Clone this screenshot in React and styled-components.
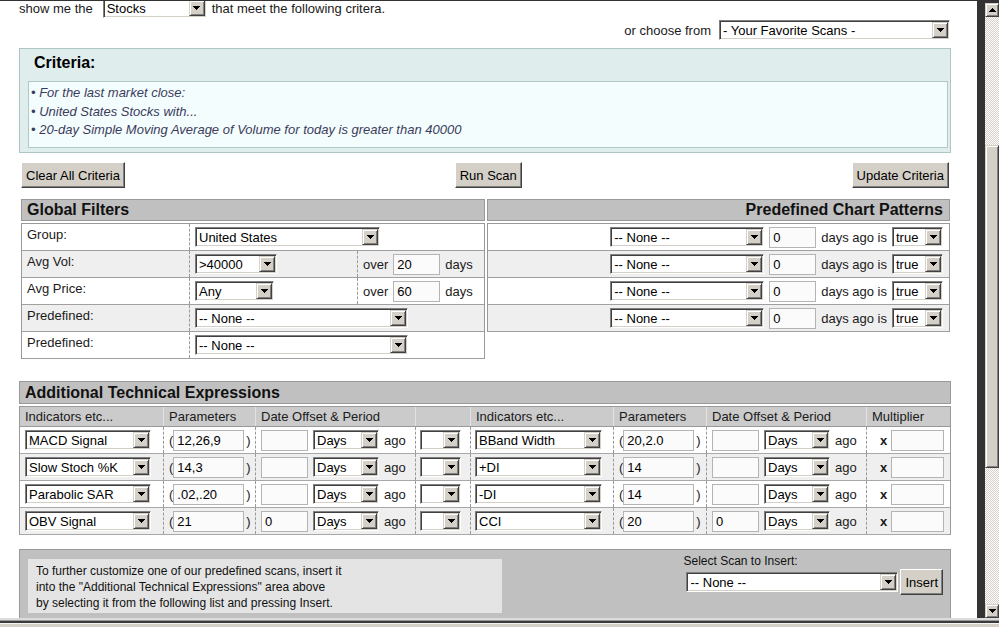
import React from 'react';
import styled, { createGlobalStyle } from 'styled-components';

const FONT = '"Liberation Sans", Arial, sans-serif';

const GlobalStyle = createGlobalStyle`
  html, body { margin: 0; padding: 0; background: #fff; overflow: hidden; }
  body { font-family: ${FONT}; font-size: 13px; color: #1a1a1a; }
  * { box-sizing: border-box; }
`;

const Frame = styled.div`
  width: 999px;
  height: 627px;
  display: flex;
  flex-direction: column;
  overflow: hidden;
  background: #fff;
`;
const TopLine = styled.div`
  height: 1px;
  flex: none;
  background: #333;
`;
const Middle = styled.div`
  flex: 1;
  min-height: 0;
  display: flex;
`;
const Content = styled.div`
  width: 977px;
  flex: none;
  overflow: hidden;
  padding: 0 26px 0 19px;
`;
const DarkBar = styled.div`
  width: 8px;
  flex: none;
  background: #333;
`;
const ScrollCol = styled.div`
  width: 14px;
  flex: none;
  background: #333;
  padding-top: 2px;
  display: flex;
  flex-direction: column;
`;
const raised = `
  background: #d4d0c8;
  border: 1px solid;
  border-color: #d4d0c8 #404040 #404040 #d4d0c8;
  box-shadow: inset 1px 1px #fff, inset -1px -1px #808080;
`;
const ScrollBtn = styled.div`
  height: 14px;
  flex: none;
  ${raised}
  display: flex;
  align-items: center;
  justify-content: center;
`;
const Track = styled.div`
  flex: ${p => (p.$fill ? 1 : 'none')};
  height: ${p => (p.$fill ? 'auto' : `${p.$h}px`)};
  background: repeating-conic-gradient(#d4d0c8 0 25%, #fff 0 50%) 0 0 / 2px 2px;
`;
const Thumb = styled.div`
  height: 323px;
  flex: none;
  ${raised}
`;
const BottomStrip = styled.div`
  height: 9px;
  flex: none;
  background: linear-gradient(
    to bottom,
    #dcdcdc 0 2px,
    #9a9a9a 2px 3px,
    #3a3a3a 3px 5px,
    #f4f4f4 5px 6px,
    #d4d0c8 6px 9px
  );
`;

/* ---------- form controls ---------- */
const SelectBox = styled.div`
  display: inline-flex;
  flex: none;
  width: ${p => p.$w}px;
  height: 20px;
  padding: 1px;
  background: #fff;
  border: 1px solid;
  border-color: #808080 #fff #fff #808080;
  box-shadow: inset 1px 1px #404040, inset -1px -1px #d4d0c8;
`;
const SelectText = styled.span`
  flex: 1;
  min-width: 0;
  padding: 1px 0 0 2px;
  font-size: 13px;
  line-height: 15px;
  color: #000;
  white-space: nowrap;
  overflow: hidden;
`;
const SelectArrow = styled.span`
  width: 16px;
  height: 16px;
  flex: none;
  ${raised}
  display: flex;
  align-items: center;
  justify-content: center;
`;
const Tri = ({ up }) => (
  <svg width="7" height="4" viewBox="0 0 7 4" shapeRendering="crispEdges">
    <path
      fill="#000"
      d={
        up
          ? 'M3 0h1v1H3zM2 1h3v1H2zM1 2h5v1H1zM0 3h7v1H0z'
          : 'M0 0h7v1H0zM1 1h5v1H1zM2 2h3v1H2zM3 3h1v1H3z'
      }
    />
  </svg>
);
const Select = ({ w, value }) => (
  <SelectBox $w={w}>
    <SelectText>{value}</SelectText>
    <SelectArrow>
      <Tri />
    </SelectArrow>
  </SelectBox>
);
const TextInput = styled.input`
  width: ${p => p.$w}px;
  height: 21px;
  flex: none;
  margin: 0;
  padding: 0 3px;
  border: 1px solid #b4b4b4;
  background: #fbfbfb;
  font: 13px ${FONT};
  color: #000;
  outline: none;
`;
const Field = ({ w, value }) => <TextInput $w={w} value={value} readOnly />;

const Button = styled.button`
  height: 26px;
  margin: 0;
  padding: 0 4px;
  font: 13px ${FONT};
  color: #000;
  background: #d4d0c8;
  border: 1px solid;
  border-color: #fff #404040 #404040 #fff;
  box-shadow: inset -1px -1px #808080;
  white-space: nowrap;
  cursor: default;
`;

/* ---------- top ---------- */
const TopRow = styled.div`
  display: flex;
  align-items: center;
  height: 20px;
  margin-top: -3px;
  white-space: nowrap;
`;
const Lead = styled.span`
  margin-right: 10px;
`;
const Trail = styled.span`
  margin-left: 5px;
`;
const ChooseRow = styled.div`
  display: flex;
  justify-content: flex-end;
  align-items: center;
  gap: 8px;
  height: 20px;
  margin-top: 2px;
  padding-right: 1px;
  white-space: nowrap;
`;

/* ---------- criteria ---------- */
const CriteriaBox = styled.div`
  margin-top: 8px;
  background: #dfeded;
  border: 1px solid #adc5c5;
  padding: 0 2px 4px 8px;
`;
const CriteriaTitle = styled.div`
  padding: 4px 0 9px 6px;
  font-size: 16px;
  font-weight: bold;
  line-height: 19px;
  color: #000;
`;
const CriteriaList = styled.div`
  background: #f4fdfd;
  border: 1px solid #b0c8c8;
  padding: 2px 3px 7.5px 2px;
`;
const CriteriaItem = styled.div`
  line-height: 18.5px;
  font-style: italic;
  color: #3b3b5c;
  white-space: nowrap;
`;

/* ---------- buttons ---------- */
const ButtonRow = styled.div`
  display: flex;
  justify-content: space-between;
  margin-top: 9px;
  padding: 0 2px;
`;

/* ---------- filter tables ---------- */
const TablesRow = styled.div`
  display: grid;
  grid-template-columns: 464px 463px;
  column-gap: 2px;
  align-items: start;
  margin-top: 11px;
  padding-left: 2px;
`;
const SectionHead = styled.div`
  height: ${p => p.$h || 22}px;
  background: #c0c0c0;
  border: 1px solid #999;
  padding: 0 6px 0 5px;
  font-size: 16px;
  font-weight: bold;
  line-height: ${p => (p.$h || 22) - 2}px;
  color: #111;
  text-align: ${p => (p.$right ? 'right' : 'left')};
  white-space: nowrap;
`;
const TableBody = styled.div`
  margin-top: 2px;
  border: 1px solid #999;
  border-bottom: none;
`;
const GFRow = styled.div`
  display: grid;
  grid-template-columns: 167px 168px 1fr;
  height: 27px;
  border-bottom: 1px solid #a0a0a0;
  background: ${p => (p.$alt ? '#efefef' : '#fff')};
`;
const GFLabel = styled.div`
  padding: 3px 0 0 5px;
  line-height: 16px;
  white-space: nowrap;
`;
const GFControl = styled.div`
  grid-column: span ${p => p.$span || 1};
  border-left: 1px dashed #999;
  padding: 3px 0 0 5px;
`;
const GFExtra = styled.div`
  border-left: 1px dashed #999;
  padding-left: 5px;
  display: flex;
  align-items: center;
  gap: 5px;
  white-space: nowrap;
`;
const PCPRow = styled.div`
  display: flex;
  justify-content: flex-end;
  align-items: center;
  gap: 5px;
  height: 27px;
  padding-right: 6px;
  border-bottom: 1px solid #a0a0a0;
  background: ${p => (p.$alt ? '#efefef' : '#fff')};
  white-space: nowrap;
`;

/* ---------- additional technical expressions ---------- */
const ATE_COLS = '143px 92px 160px 55px 143px 93px 160px 84px';
const ATEWrap = styled.div`
  margin-top: 22px;
`;
const ATEGrid = styled.div`
  margin-top: 2px;
  border: 1px solid #999;
  border-bottom: none;
`;
const ATEHeadRow = styled.div`
  display: grid;
  grid-template-columns: ${ATE_COLS};
  height: 20px;
  background: #cbcbcb;
  border-bottom: 1px solid #999;
`;
const HeadCell = styled.div`
  padding-left: 5px;
  line-height: 19px;
  white-space: nowrap;
  overflow: hidden;
  & + & {
    border-left: 1px solid #e2e2e2;
  }
`;
const ATERow = styled.div`
  display: grid;
  grid-template-columns: ${ATE_COLS};
  height: 27px;
  border-bottom: 1px solid #a8a8a8;
  background: ${p => (p.$alt ? '#efefef' : '#fff')};
`;
const Cell = styled.div`
  display: flex;
  align-items: center;
  gap: ${p => p.$gap || 0}px;
  padding-left: ${p => p.$pl}px;
  white-space: nowrap;
  & + & {
    border-left: 1px dashed #999;
  }
`;
const Paren = styled.span`
  margin-left: ${p => (p.$close ? 2 : 0)}px;
`;
const Times = styled.b`
  font-weight: bold;
  margin-right: 4px;
`;

/* ---------- insert box ---------- */
const InsertBox = styled.div`
  margin-top: 14px;
  height: 90px;
  display: flex;
  justify-content: space-between;
  align-items: flex-start;
  background: #c0c0c0;
  border: 1px solid #999;
  padding: 4px 7px 0 8px;
`;
const InfoPanel = styled.div`
  width: 474px;
  margin-top: 5px;
  padding: 4px 8px 2px 8px;
  background: #e4e4e4;
  font-size: 12px;
  line-height: 16px;
  color: #111;
  white-space: nowrap;
`;
const InsertGroup = styled.div`
  display: flex;
  flex-direction: column;
`;
const InsertLabel = styled.div`
  font-size: 12px;
  line-height: 15px;
  color: #111;
`;
const InsertControls = styled.div`
  display: flex;
  align-items: center;
  gap: 2px;
  margin-left: 3px;
`;

const gfRows = [
  { label: 'Group:', sel: 'United States', w: 185 },
  { label: 'Avg Vol:', sel: '>40000', w: 82, over: '20' },
  { label: 'Avg Price:', sel: 'Any', w: 79, over: '60' },
  { label: 'Predefined:', sel: '-- None --', w: 213 },
  { label: 'Predefined:', sel: '-- None --', w: 213 },
];

const ateRows = [
  { a: 'MACD Signal', ap: '12,26,9', ao: '', b: 'BBand Width', bp: '20,2.0', bo: '' },
  { a: 'Slow Stoch %K', ap: '14,3', ao: '', b: '+DI', bp: '14', bo: '' },
  { a: 'Parabolic SAR', ap: '.02,.20', ao: '', b: '-DI', bp: '14', bo: '' },
  { a: 'OBV Signal', ap: '21', ao: '0', b: 'CCI', bp: '20', bo: '0' },
];

const ScrollBar = () => (
  <ScrollCol>
    <ScrollBtn>
      <Tri up />
    </ScrollBtn>
    <Track $h={128} />
    <Thumb />
    <Track $fill />
    <ScrollBtn>
      <Tri />
    </ScrollBtn>
  </ScrollCol>
);

export default function App() {
  return (
    <Frame>
      <GlobalStyle />
      <TopLine />
      <Middle>
        <Content>
          <TopRow>
            <Lead>show me the</Lead>
            <Select w={104} value="Stocks" />
            <Trail>that meet the following critera.</Trail>
          </TopRow>
          <ChooseRow>
            <span>or choose from</span>
            <Select w={231} value="- Your Favorite Scans -" />
          </ChooseRow>

          <CriteriaBox>
            <CriteriaTitle>Criteria:</CriteriaTitle>
            <CriteriaList>
              <CriteriaItem>• For the last market close:</CriteriaItem>
              <CriteriaItem>• United States Stocks with...</CriteriaItem>
              <CriteriaItem>
                • 20-day Simple Moving Average of Volume for today is greater than 40000
              </CriteriaItem>
            </CriteriaList>
          </CriteriaBox>

          <ButtonRow>
            <Button>Clear All Criteria</Button>
            <Button>Run Scan</Button>
            <Button>Update Criteria</Button>
          </ButtonRow>

          <TablesRow>
            <div>
              <SectionHead>Global Filters</SectionHead>
              <TableBody>
                {gfRows.map((r, i) => (
                  <GFRow key={i} $alt={i % 2 === 1}>
                    <GFLabel>{r.label}</GFLabel>
                    <GFControl $span={r.over ? 1 : 2}>
                      <Select w={r.w} value={r.sel} />
                    </GFControl>
                    {r.over && (
                      <GFExtra>
                        <span>over</span>
                        <Field w={47} value={r.over} />
                        <span>days</span>
                      </GFExtra>
                    )}
                  </GFRow>
                ))}
              </TableBody>
            </div>
            <div>
              <SectionHead $right>Predefined Chart Patterns</SectionHead>
              <TableBody>
                {[0, 1, 2, 3].map(i => (
                  <PCPRow key={i} $alt={i % 2 === 1}>
                    <Select w={154} value="-- None --" />
                    <Field w={47} value="0" />
                    <span>days ago is</span>
                    <Select w={51} value="true" />
                  </PCPRow>
                ))}
              </TableBody>
            </div>
          </TablesRow>

          <ATEWrap>
            <SectionHead $h={23}>Additional Technical Expressions</SectionHead>
            <ATEGrid>
              <ATEHeadRow>
                <HeadCell>Indicators etc...</HeadCell>
                <HeadCell>Parameters</HeadCell>
                <HeadCell>Date Offset &amp; Period</HeadCell>
                <HeadCell />
                <HeadCell>Indicators etc...</HeadCell>
                <HeadCell>Parameters</HeadCell>
                <HeadCell>Date Offset &amp; Period</HeadCell>
                <HeadCell>Multiplier</HeadCell>
              </ATEHeadRow>
              {ateRows.map((r, i) => (
                <ATERow key={i} $alt={i % 2 === 1}>
                  <Cell $pl={5}>
                    <Select w={126} value={r.a} />
                  </Cell>
                  <Cell $pl={5}>
                    <Paren>(</Paren>
                    <Field w={71} value={r.ap} />
                    <Paren $close>)</Paren>
                  </Cell>
                  <Cell $pl={5} $gap={5}>
                    <Field w={47} value={r.ao} />
                    <Select w={66} value="Days" />
                    <span>ago</span>
                  </Cell>
                  <Cell $pl={4}>
                    <Select w={41} value="" />
                  </Cell>
                  <Cell $pl={4}>
                    <Select w={127} value={r.b} />
                  </Cell>
                  <Cell $pl={5}>
                    <Paren>(</Paren>
                    <Field w={71} value={r.bp} />
                    <Paren $close>)</Paren>
                  </Cell>
                  <Cell $pl={5} $gap={5}>
                    <Field w={47} value={r.bo} />
                    <Select w={66} value="Days" />
                    <span>ago</span>
                  </Cell>
                  <Cell $pl={13}>
                    <Times>x</Times>
                    <Field w={53} value="" />
                  </Cell>
                </ATERow>
              ))}
            </ATEGrid>
          </ATEWrap>

          <InsertBox>
            <InfoPanel>
              To further customize one of our predefined scans, insert it
              <br />
              into the "Additional Technical Expressions" area above
              <br />
              by selecting it from the following list and pressing Insert.
            </InfoPanel>
            <InsertGroup>
              <InsertLabel>Select Scan to Insert:</InsertLabel>
              <InsertControls>
                <Select w={212} value="-- None --" />
                <Button>Insert</Button>
              </InsertControls>
            </InsertGroup>
          </InsertBox>
        </Content>
        <DarkBar />
        <ScrollBar />
      </Middle>
      <BottomStrip />
    </Frame>
  );
}
